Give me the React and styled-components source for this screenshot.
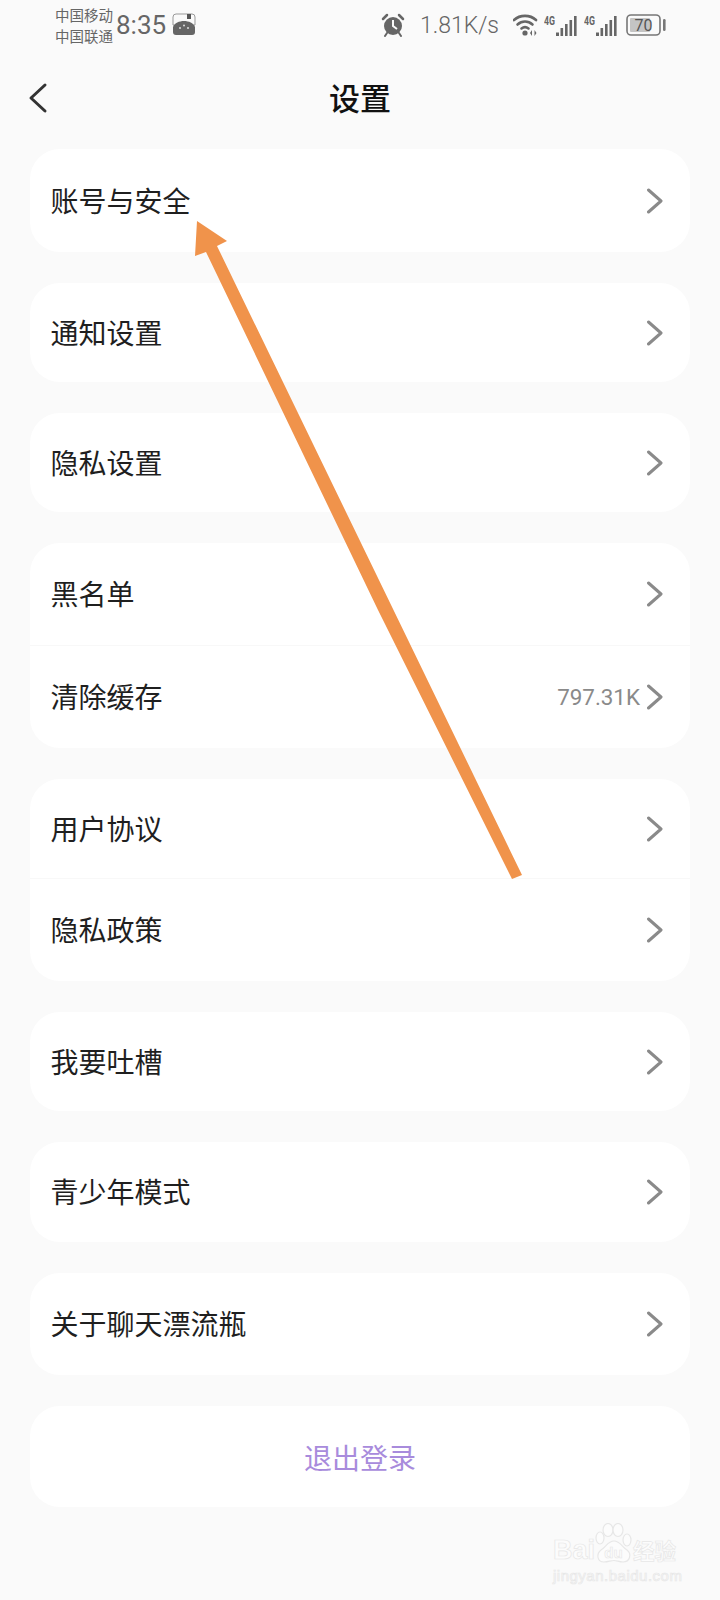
import React from 'react'
import styled, { createGlobalStyle } from 'styled-components'

const GlobalStyle = createGlobalStyle`
  html, body { margin: 0; padding: 0; background: #fafafa; }
  body { font-family: "Noto Sans CJK SC", "Noto Sans", sans-serif; }
`

const Page = styled.div`
  position: relative;
  width: 720px;
  height: 1600px;
  overflow: hidden;
  background: #fafafa;
`

const StatusBar = styled.div`
  display: flex;
  align-items: center;
  height: 50px;
  padding: 0 54px 0 55px;
  color: #666;
`

const Carriers = styled.div`
  font-size: 14.5px;
  line-height: 21px;
  width: 60px;
  white-space: nowrap;
`

const Clock = styled.div`
  font-family: "Roboto", sans-serif;
  font-size: 26px;
  margin-left: 1px;
`

const StatusRight = styled.div`
  display: flex;
  align-items: center;
  margin-left: auto;
`

const Speed = styled.div`
  font-family: "Roboto", sans-serif;
  font-size: 23px;
  font-weight: 300;
  margin: 0 14px 0 15px;
`

const IconSlot = styled.div`
  display: flex;
  margin-left: ${p => p.$ml || 0}px;
`

const Header = styled.div`
  position: relative;
  display: flex;
  align-items: center;
  justify-content: center;
  height: 96px;
  margin-bottom: 3px;
`

const Title = styled.div`
  font-size: 31px;
  color: #111;
  font-weight: 500;
  padding-bottom: 4px;
`

const Back = styled.svg`
  position: absolute;
  left: 28px;
  top: 32px;
`

const List = styled.div`
  display: flex;
  flex-direction: column;
  gap: 31px;
  margin: 0 30px;
`

const Card = styled.div`
  background: #fff;
  border-radius: 30px;
  overflow: hidden;
`

const Row = styled.div`
  box-sizing: border-box;
  display: flex;
  align-items: center;
  height: ${p => p.$h || 100}px;
  padding: 0 26px 0 20.5px;
  border-top: ${p => (p.$divided ? '1px solid #f8f8f8' : 'none')};
  font-size: 28px;
  color: #1f1f1f;
`

const Label = styled.div`
  flex: 1;
  margin-top: -2px;
`

const Value = styled.div`
  font-family: "Roboto", sans-serif;
  font-size: 22.4px;
  color: #8a8a8a;
  margin-right: 6px;
`

const LogoutRow = styled.div`
  display: flex;
  align-items: center;
  justify-content: center;
  height: 101px;
  font-size: 28px;
  color: #a88bdc;
`

const ArrowOverlay = styled.svg`
  position: absolute;
  left: 0;
  top: 0;
  pointer-events: none;
`

const Watermark = styled.div`
  position: absolute;
  left: 553px;
  top: 1522px;
  width: 130px;
  color: #fcfcfc;
  -webkit-text-stroke: 0.7px #e7e7e7;
  font-family: "Liberation Sans", sans-serif;
`

const WatermarkTop = styled.div`
  display: flex;
  align-items: flex-end;
  height: 41px;
  font-size: 27px;
  font-weight: 700;
  line-height: 25px;
  white-space: nowrap;
`

const WatermarkCn = styled.span`
  font-family: "Noto Sans CJK SC", sans-serif;
  font-size: 21.5px;
  line-height: 26px;
  font-weight: 700;
`

const WatermarkUrl = styled.div`
  font-size: 15px;
  line-height: 16px;
  margin-top: 5px;
  letter-spacing: 0.5px;
  white-space: nowrap;
`

const Chevron = () => (
  <svg width="18" height="26" viewBox="0 0 18 26" fill="none">
    <path d="M2.5 2 L15 13 L2.5 24" stroke="#8a8a8a" strokeWidth="3" strokeLinecap="round" strokeLinejoin="round" />
  </svg>
)

const Alarm = () => (
  <svg width="24" height="24" viewBox="0 0 24 24">
    <circle cx="12" cy="13" r="9" fill="#666" />
    <path d="M12 7 V13 L16 16" stroke="#fafafa" strokeWidth="2" fill="none" />
    <path d="M2 6 L6 2 M22 6 L18 2" stroke="#666" strokeWidth="2.5" strokeLinecap="round" />
    <path d="M6 20 L4 23 M18 20 L20 23" stroke="#666" strokeWidth="2" strokeLinecap="round" />
  </svg>
)

const Wifi = () => (
  <svg width="25" height="22" viewBox="0 0 25 22" fill="none">
    <path d="M1 6 C7 0.5 17 0.5 23 6" stroke="#666" strokeWidth="2.6" strokeLinecap="round" />
    <path d="M4.5 10.5 C9 6.5 15 6.5 19.5 10.5" stroke="#666" strokeWidth="2.6" strokeLinecap="round" />
    <path d="M8.5 14.5 C10.5 13 13.5 13 15.5 14.5" stroke="#666" strokeWidth="2.6" strokeLinecap="round" />
    <circle cx="12" cy="19" r="2.6" fill="#666" />
    <path d="M19 16 L17 19 L19 22 Z M21.5 16 L23.5 19 L21.5 22 Z" fill="#666" />
  </svg>
)

const Signal = () => (
  <svg width="33" height="21" viewBox="0 0 33 21">
    <text x="0" y="9.5" fontSize="12" fontWeight="700" fill="#666" fontFamily="Roboto, sans-serif" textLength="11" lengthAdjust="spacingAndGlyphs">4G</text>
    <rect x="12" y="17.5" width="3" height="3.5" fill="#666" />
    <rect x="16.5" y="13" width="2.6" height="8" fill="#666" />
    <rect x="21" y="9" width="2.6" height="12" fill="#666" />
    <rect x="25.5" y="5" width="2.6" height="16" fill="#666" />
    <rect x="30" y="1" width="2.6" height="20" fill="#666" />
  </svg>
)

const Battery = () => (
  <svg width="40" height="22" viewBox="0 0 40 22">
    <rect x="1" y="1" width="33" height="20" rx="4" fill="none" stroke="#777" strokeWidth="1.6" />
    <rect x="4" y="4" width="20" height="14" rx="1" fill="#c4c4c4" />
    <text x="17.5" y="17" fontSize="16" textAnchor="middle" fill="#555" fontFamily="Roboto, sans-serif">70</text>
    <rect x="37" y="5" width="2.6" height="12" rx="1.3" fill="#777" />
  </svg>
)

const NotifWrap = styled.svg`
  margin-left: 6px;
`

const Notif = () => (
  <NotifWrap width="24" height="24" viewBox="0 0 24 24">
    <path d="M4 1 H20 a3 3 0 0 1 3 3 V12 H1 V4 a3 3 0 0 1 3 -3 Z" fill="none" stroke="#999" strokeWidth="1" />
    <rect x="15" y="1" width="4" height="5" fill="#555" />
    <path d="M1 14 C4 6 20 6 23 14 V19 a3 3 0 0 1 -3 3 H4 a3 3 0 0 1 -3 -3 Z" fill="#666" />
    <circle cx="8" cy="15" r="1" fill="#ddd" />
    <circle cx="12" cy="12.5" r="1" fill="#ddd" />
    <circle cx="16" cy="15" r="1" fill="#ddd" />
  </NotifWrap>
)

const Paw = () => (
  <svg width="38" height="40" viewBox="0 0 38 40" fill="#fcfcfc" stroke="#e7e7e7" strokeWidth="1.2">
    <ellipse cx="5" cy="15" rx="4" ry="6" />
    <ellipse cx="13" cy="7" rx="5" ry="6.5" />
    <ellipse cx="23" cy="7" rx="5" ry="6.5" />
    <ellipse cx="32" cy="17" rx="4" ry="6" />
    <path d="M19 18 C25 18 27 24 32 27 C37 31 35 39 28 39 C24 39 22 37.5 19 37.5 C16 37.5 13 39 9 39 C2 39 1 31 6 27 C11 24 13 18 19 18 Z" />
    <text x="18.5" y="35" fontSize="15" fontWeight="700" textAnchor="middle" fontFamily="Liberation Sans, sans-serif" strokeWidth="0.6">du</text>
  </svg>
)

const groups = [
  [{ label: '账号与安全', h: 103 }],
  [{ label: '通知设置', h: 99 }],
  [{ label: '隐私设置', h: 99 }],
  [{ label: '黑名单', h: 102 }, { label: '清除缓存', value: '797.31K', h: 103 }],
  [{ label: '用户协议', h: 99 }, { label: '隐私政策', h: 103 }],
  [{ label: '我要吐槽', h: 99 }],
  [{ label: '青少年模式', h: 100 }],
  [{ label: '关于聊天漂流瓶', h: 102 }],
]

export default function App() {
  return (
    <Page>
      <GlobalStyle />
      <StatusBar>
        <Carriers>
          <div>中国移动</div>
          <div>中国联通</div>
        </Carriers>
        <Clock>8:35</Clock>
        <Notif />
        <StatusRight>
          <Alarm />
          <Speed>1.81K/s</Speed>
          <Wifi />
          <IconSlot $ml={6}><Signal /></IconSlot>
          <IconSlot $ml={7}><Signal /></IconSlot>
          <IconSlot $ml={9}><Battery /></IconSlot>
        </StatusRight>
      </StatusBar>
      <Header>
        <Back width="20" height="32" viewBox="0 0 20 32" fill="none">
          <path d="M17 3 L3 16 L17 29" stroke="#333" strokeWidth="3" strokeLinecap="round" strokeLinejoin="round" />
        </Back>
        <Title>设置</Title>
      </Header>
      <List>
        {groups.map((rows, i) => (
          <Card key={i}>
            {rows.map((row, j) => (
              <Row key={row.label} $h={row.h} $divided={j > 0}>
                <Label>{row.label}</Label>
                {row.value && <Value>{row.value}</Value>}
                <Chevron />
              </Row>
            ))}
          </Card>
        ))}
        <Card>
          <LogoutRow>退出登录</LogoutRow>
        </Card>
      </List>
      <Watermark>
        <WatermarkTop>
          Bai<Paw /><WatermarkCn>经验</WatermarkCn>
        </WatermarkTop>
        <WatermarkUrl>jingyan.baidu.com</WatermarkUrl>
      </Watermark>
      <ArrowOverlay width="720" height="1600" viewBox="0 0 720 1600">
        <polygon
          points="197,221 227,241 217,246 522,875 512,879 378,610 206,252 195,256"
          fill="#f0934b"
        />
      </ArrowOverlay>
    </Page>
  )
}
